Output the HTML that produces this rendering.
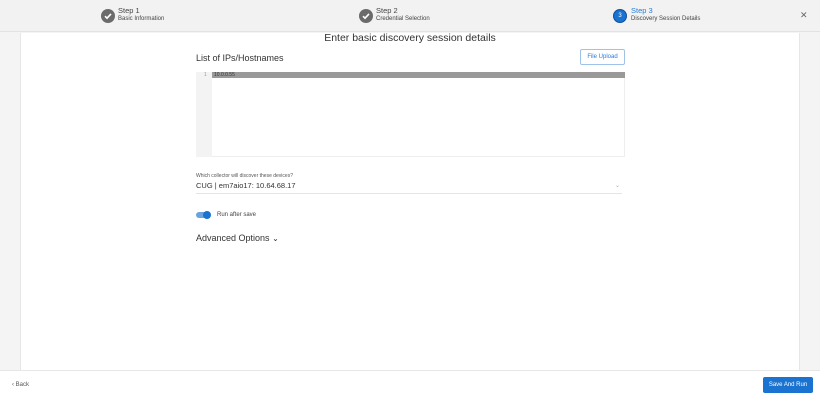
<!DOCTYPE html>
<html><head><style>
*{margin:0;padding:0;box-sizing:border-box}
body{width:820px;height:400px;position:relative;background:#f4f4f4;font-family:"Liberation Sans",sans-serif;color:#333;overflow:hidden}
.abs{position:absolute}
.hdr{left:0;top:0;width:820px;height:32px;background:#f2f2f2;border-bottom:1px solid #e2e2e2}
.chk{width:14px;height:14px;border-radius:50%;background:#6b6b6b}
.t1{font-size:7.5px;color:#444}
.t2{font-size:6px;color:#444}
.card{left:20px;top:33px;width:780px;height:337px;background:#fff;border-left:1px solid #e6e6e6;border-right:1px solid #e6e6e6}
.foot{left:0;top:370px;width:820px;height:30px;background:#fff;border-top:1px solid #e6e6e6}
</style></head><body>
<div class="abs hdr"></div>
<div class="abs chk" style="left:101px;top:9px"><svg width="14" height="14"><path d="M4 7.2l2 2 4-4.3" stroke="#fff" stroke-width="1.6" fill="none"/></svg></div>
<div class="abs t1" style="left:118px;top:6px">Step 1</div>
<div class="abs t2" style="left:118px;top:16px">Basic Information</div>
<div class="abs chk" style="left:359px;top:9px"><svg width="14" height="14"><path d="M4 7.2l2 2 4-4.3" stroke="#fff" stroke-width="1.6" fill="none"/></svg></div>
<div class="abs t1" style="left:376px;top:6px">Step 2</div>
<div class="abs t2" style="left:376px;top:16px">Credential Selection</div>
<div class="abs" style="left:613px;top:9px;width:14px;height:14px;border-radius:50%;background:#1a73d0;border:1px solid #0d4f9a;color:#fff;font-size:6px;text-align:center;line-height:12px">3</div>
<div class="abs t1" style="left:631px;top:6px;color:#2a7bd4">Step 3</div>
<div class="abs t2" style="left:631px;top:16px">Discovery Session Details</div>
<div class="abs" style="left:800px;top:10px;font-size:9px;color:#666">✕</div>
<div class="abs card"></div>
<div class="abs" style="left:0;top:32px;width:820px;text-align:center;font-size:10.5px;color:#333">Enter basic discovery session details</div>
<div class="abs" style="left:196px;top:53px;font-size:9px">List of IPs/Hostnames</div>
<div class="abs" style="left:580px;top:49px;width:45px;height:16px;border:1px solid #9fc2e8;border-radius:2px;font-size:6px;color:#2a7bd4;text-align:center;line-height:15px">File Upload</div>
<div class="abs" style="left:196px;top:72px;width:429px;height:85px;border:1px solid #eee;background:#fff"></div>
<div class="abs" style="left:196px;top:72px;width:16px;height:85px;background:#f3f3f3"></div>
<div class="abs" style="left:204px;top:72px;font-size:5px;color:#999">1</div>
<div class="abs" style="left:212px;top:72px;width:413px;height:6px;background:#999"></div>
<div class="abs" style="left:214px;top:72px;font-size:5px;color:#333;line-height:6px">10.0.0.55</div>
<div class="abs" style="left:196px;top:173px;font-size:5px;color:#555">Which collector will discover these devices?</div>
<div class="abs" style="left:196px;top:181px;font-size:7.5px;color:#333">CUG | em7aio17: 10.64.68.17</div>
<div class="abs" style="left:615px;top:182px;font-size:6px;color:#aaa">⌄</div>
<div class="abs" style="left:196px;top:193px;width:426px;height:1px;background:#e4e4e4"></div>
<div class="abs" style="left:196px;top:212px;width:14px;height:6px;border-radius:3px;background:#6aa3e0"></div>
<div class="abs" style="left:203px;top:211px;width:8px;height:8px;border-radius:50%;background:#1a73d0"></div>
<div class="abs" style="left:217px;top:212px;font-size:6px;color:#444">Run after save</div>
<div class="abs" style="left:196px;top:233px;font-size:9px;color:#333">Advanced Options <span style="font-size:8px">⌄</span></div>
<div class="abs foot"></div>
<div class="abs" style="left:12px;top:382px;font-size:6px;color:#555">‹ Back</div>
<div class="abs" style="left:763px;top:377px;width:50px;height:16px;background:#1a73d0;border-radius:2px;color:#fff;font-size:6px;text-align:center;line-height:17px">Save And Run</div>
</body></html>
